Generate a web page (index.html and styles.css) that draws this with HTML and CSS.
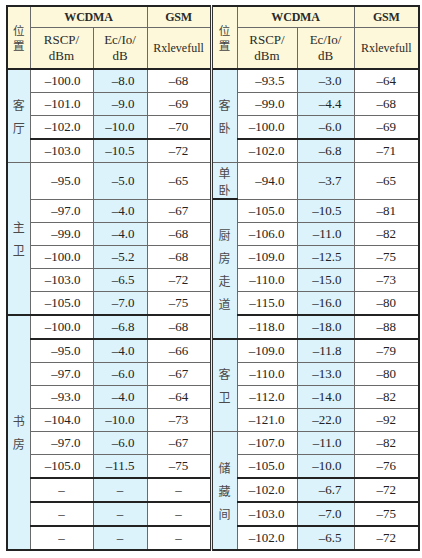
FILE: index.html
```html
<!DOCTYPE html>
<html lang="zh">
<head>
<meta charset="utf-8">
<link rel="stylesheet" href="styles.css">
</head>
<body>
<table class="t">
  <colgroup>
    <col class="w-p1"><col class="w-r1"><col class="w-e1"><col class="w-g1">
    <col class="w-p2"><col class="w-r2"><col class="w-e2"><col class="w-g2">
  </colgroup>
  <thead>
    <tr class="h1">
      <th rowspan="2" class="hp">位<br>置</th><th colspan="2" class="hb">WCDMA</th><th class="hb">GSM</th>
      <th rowspan="2" class="hp mid">位<br>置</th><th colspan="2" class="hb">WCDMA</th><th class="hb">GSM</th>
    </tr>
    <tr class="h2">
      <th>RSCP/<br>dBm</th><th>Ec/Io/<br>dB</th><th class="rx">Rxlevefull</th>
      <th>RSCP/<br>dBm</th><th>Ec/Io/<br>dB</th><th class="rx">Rxlevefull</th>
    </tr>
  </thead>
  <tbody>
    <tr class="k"><td rowspan="4" class="p">客<br>厅</td><td class="r">–100.0</td><td class="e">–8.0</td><td class="g">–68</td><td rowspan="4" class="p mid">客<br>卧</td><td class="r">–93.5</td><td class="e">–3.0</td><td class="g">–64</td></tr>
    <tr><td class="r">–101.0</td><td class="e">–9.0</td><td class="g">–69</td><td class="r">–99.0</td><td class="e">–4.4</td><td class="g">–68</td></tr>
    <tr class="m"><td class="r">–102.0</td><td class="e">–10.0</td><td class="g">–70</td><td class="r">–100.0</td><td class="e">–6.0</td><td class="g">–69</td></tr>
    <tr class="k"><td class="r">–103.0</td><td class="e">–10.5</td><td class="g">–72</td><td class="r">–102.0</td><td class="e">–6.8</td><td class="g">–71</td></tr>
    <tr class="tall"><td rowspan="6" class="p">主<br>卫</td><td class="r">–95.0</td><td class="e">–5.0</td><td class="g">–65</td><td class="p mid sm">单<br>卧</td><td class="r">–94.0</td><td class="e">–3.7</td><td class="g">–65</td></tr>
    <tr><td class="r">–97.0</td><td class="e">–4.0</td><td class="g">–67</td><td rowspan="6" class="p mid k2">厨<br>房<br>走<br>道</td><td class="r">–105.0</td><td class="e">–10.5</td><td class="g">–81</td></tr>
    <tr><td class="r">–99.0</td><td class="e">–4.0</td><td class="g">–68</td><td class="r">–106.0</td><td class="e">–11.0</td><td class="g">–82</td></tr>
    <tr><td class="r">–100.0</td><td class="e">–5.2</td><td class="g">–68</td><td class="r">–109.0</td><td class="e">–12.5</td><td class="g">–75</td></tr>
    <tr><td class="r">–103.0</td><td class="e">–6.5</td><td class="g">–72</td><td class="r">–110.0</td><td class="e">–15.0</td><td class="g">–73</td></tr>
    <tr><td class="r">–105.0</td><td class="e">–7.0</td><td class="g">–75</td><td class="r">–115.0</td><td class="e">–16.0</td><td class="g">–80</td></tr>
    <tr class="k"><td rowspan="10" class="p">书<br>房</td><td class="r">–100.0</td><td class="e">–6.8</td><td class="g">–68</td><td class="r">–118.0</td><td class="e">–18.0</td><td class="g">–88</td></tr>
    <tr class="k"><td class="r">–95.0</td><td class="e">–4.0</td><td class="g">–66</td><td rowspan="4" class="p mid">客<br>卫</td><td class="r">–109.0</td><td class="e">–11.8</td><td class="g">–79</td></tr>
    <tr><td class="r">–97.0</td><td class="e">–6.0</td><td class="g">–67</td><td class="r">–110.0</td><td class="e">–13.0</td><td class="g">–80</td></tr>
    <tr><td class="r">–93.0</td><td class="e">–4.0</td><td class="g">–64</td><td class="r">–112.0</td><td class="e">–14.0</td><td class="g">–82</td></tr>
    <tr><td class="r">–104.0</td><td class="e">–10.0</td><td class="g">–73</td><td class="r">–121.0</td><td class="e">–22.0</td><td class="g">–92</td></tr>
    <tr><td class="r">–97.0</td><td class="e">–6.0</td><td class="g">–67</td><td rowspan="5" class="p mid">储<br>藏<br>间</td><td class="r">–107.0</td><td class="e">–11.0</td><td class="g">–82</td></tr>
    <tr><td class="r">–105.0</td><td class="e">–11.5</td><td class="g">–75</td><td class="r">–105.0</td><td class="e">–10.0</td><td class="g">–76</td></tr>
    <tr class="k"><td class="c">–</td><td class="e c">–</td><td class="c">–</td><td class="r">–102.0</td><td class="e">–6.7</td><td class="g">–72</td></tr>
    <tr class="k"><td class="c">–</td><td class="e c">–</td><td class="c">–</td><td class="r">–103.0</td><td class="e">–7.0</td><td class="g">–75</td></tr>
    <tr class="k"><td class="c">–</td><td class="e c">–</td><td class="c">–</td><td class="r">–102.0</td><td class="e">–6.5</td><td class="g">–72</td></tr>
  </tbody>
</table>
</body>
</html>
```

FILE: styles.css
```css
html, body {
  margin: 0;
  padding: 0;
  background: #ffffff;
}

.t {
  border-collapse: collapse;
  table-layout: fixed;
  width: 413px;
  margin: 5px 0 0 6px;
  font-family: "Liberation Serif", "DejaVu Serif", serif;
  font-size: 13px;
  color: #222;
  border: 2px solid #222;
}

.t th, .t td {
  font-family: "Liberation Serif", "DejaVu Serif", serif;
}

.w-p1 { width: 23px; }
.w-r1 { width: 63px; }
.w-e1 { width: 54px; }
.w-g1 { width: 64px; }
.w-p2 { width: 26px; }
.w-r2 { width: 60px; }
.w-e2 { width: 57px; }
.w-g2 { width: 65px; }

th, td {
  border: 1px solid #6a6a6a;
  padding: 0;
  vertical-align: middle;
}

th {
  background: #fcf8d9;
  font-weight: normal;
  text-align: center;
  color: #2a2a2a;
}

.h1 th { height: 20px; }
.h2 th {
  height: 40px;
  line-height: 16px;
}

.t .hb {
  font-weight: bold;
  font-size: 12px;
  letter-spacing: -0.2px;
}

.t .rx {
  font-size: 12px;
}

.t .hp {
  font-family: "Noto Sans CJK SC", sans-serif;
  font-size: 11.5px;
  line-height: 15px;
  color: #444;
}

thead tr.h2 th {
  border-bottom: 2px solid #222;
}

td {
  height: 22px;
  line-height: 14px;
}

.tall td { height: 35px; }

.t .p {
  background: #dcf3fc;
  text-align: center;
  font-family: "Noto Sans CJK SC", sans-serif;
  font-size: 12px;
  line-height: 23px;
  color: #4a4a4a;
}

.t .p.sm { line-height: 17px; }

.mid { border-left: 3px double #333; }

.r {
  text-align: right;
  padding-right: 12px;
}

.e {
  background: #dcf3fc;
  text-align: right;
  padding-right: 12px;
}

.g { text-align: center; }

.c {
  text-align: center;
  padding-right: 0;
}

tr.k td { border-top: 2px solid #222; }
tr.m td { border-top: 1px solid #333; }
.k2 { border-top: 2px solid #222; }
```
